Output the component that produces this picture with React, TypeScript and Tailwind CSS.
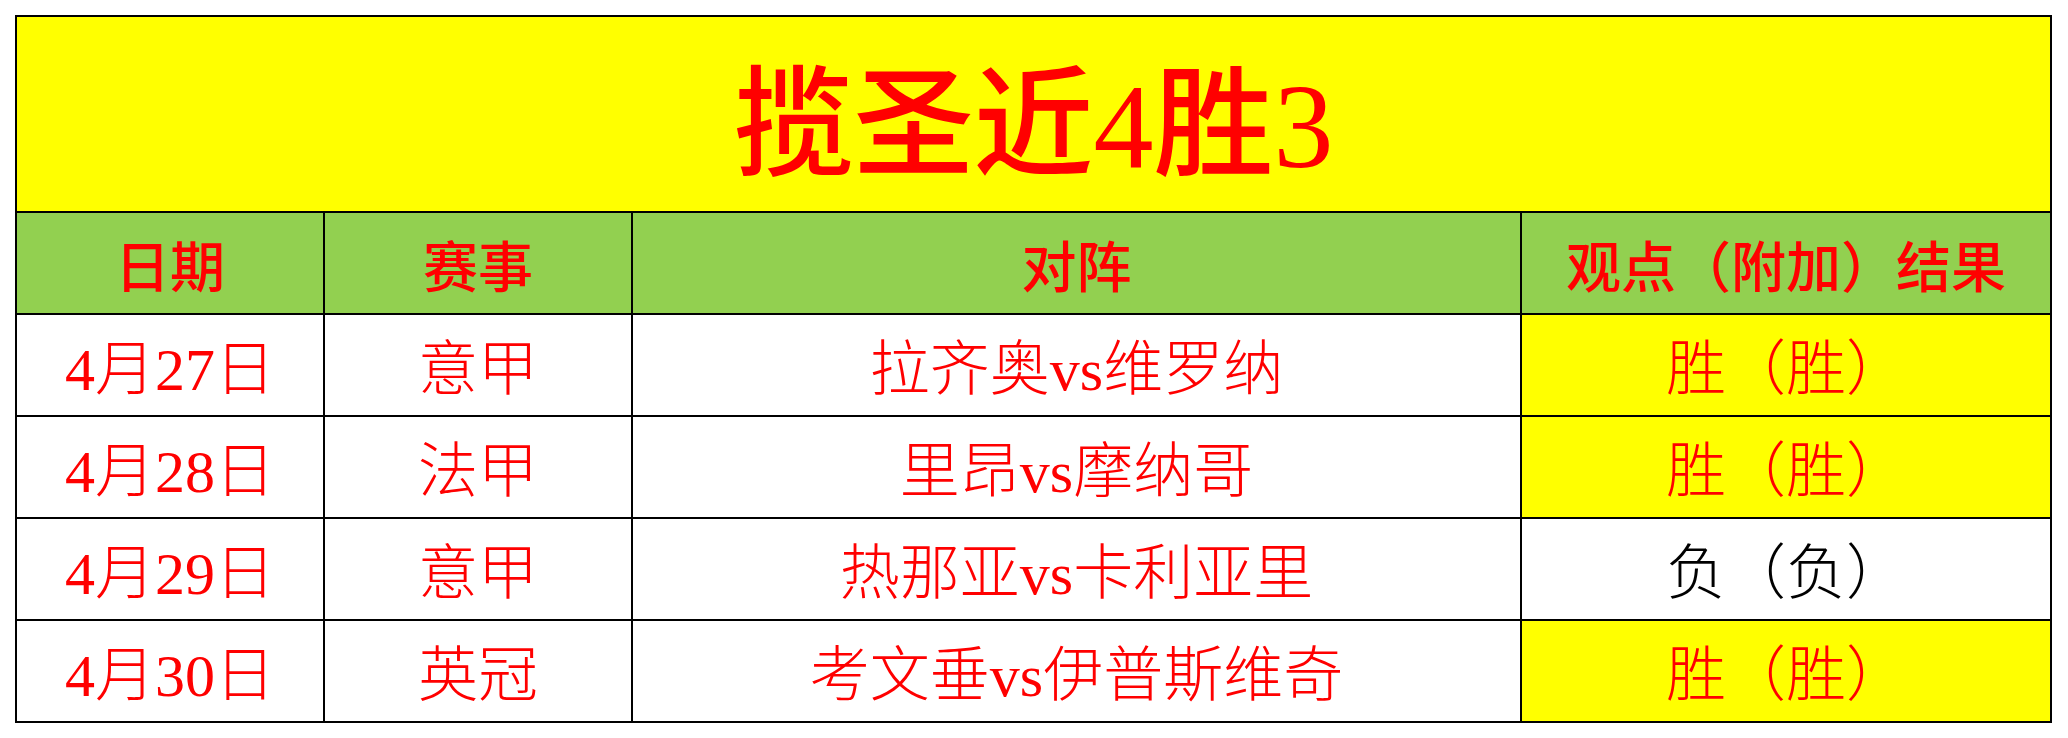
import React from "react";

const FONT = { fontFamily: '"Liberation Serif", "Noto Sans CJK SC", serif' };

type Row = { date: string; league: string; match: string; result: string; win: boolean };

const rows: Row[] = [
  { date: "4月27日", league: "意甲", match: "拉齐奥vs维罗纳", result: "胜（胜）", win: true },
  { date: "4月28日", league: "法甲", match: "里昂vs摩纳哥", result: "胜（胜）", win: true },
  { date: "4月29日", league: "意甲", match: "热那亚vs卡利亚里", result: "负（负）", win: false },
  { date: "4月30日", league: "英冠", match: "考文垂vs伊普斯维奇", result: "胜（胜）", win: true },
];

export default function App() {
  return (
    <div className="w-[2068px] h-[738px] bg-white pt-[15px] pl-[15px]" style={FONT}>
      <div className="grid w-[2037px] grid-cols-[306px_306px_887px_528px] grid-rows-[194px_100px_100px_100px_100px_100px] gap-[2px] bg-black p-[2px]">
        <div className="col-span-4 flex items-center justify-center bg-[#ffff00] pt-[26px] text-[120px] font-medium leading-none text-[#ff0000]">
          揽圣近4胜3
        </div>

        {["日期", "赛事", "对阵", "观点（附加）结果"].map((h) => (
          <div
            key={h}
            className="flex items-center justify-center bg-[#92d050] pt-[10px] text-[55px] font-medium leading-none text-[#ff0000]"
          >
            {h}
          </div>
        ))}

        {rows.map((r) => (
          <React.Fragment key={r.date}>
            <div className="flex items-center justify-center bg-white pt-[10px] text-[60px] font-light leading-none text-[#ff0000]">
              {r.date}
            </div>
            <div className="flex items-center justify-center bg-white pt-[10px] text-[60px] font-light leading-none text-[#ff0000]">
              {r.league}
            </div>
            <div className="flex items-center justify-center bg-white pt-[10px] text-[60px] font-light leading-none text-[#ff0000]">
              {r.match}
            </div>
            <div
              className={
                r.win
                  ? "flex items-center justify-center bg-[#ffff00] pt-[10px] text-[60px] font-light leading-none text-[#ff0000]"
                  : "flex items-center justify-center bg-white pt-[10px] text-[60px] font-light leading-none text-black"
              }
            >
              {r.result}
            </div>
          </React.Fragment>
        ))}
      </div>
    </div>
  );
}
